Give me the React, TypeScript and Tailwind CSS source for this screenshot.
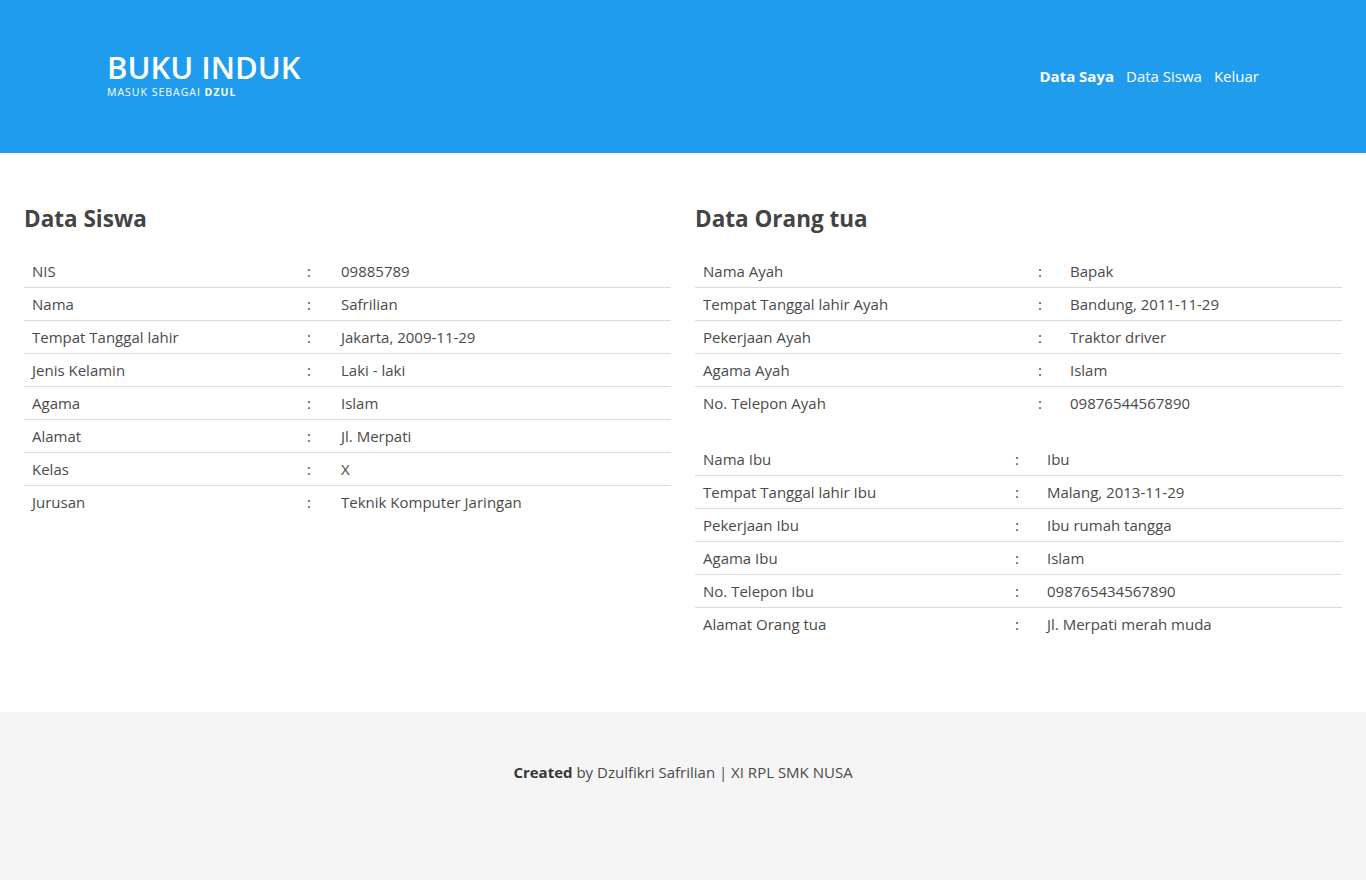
type Row = { label: string; value: string };

const siswa: Row[] = [
    { label: "NIS", value: "09885789" },
    { label: "Nama", value: "Safrilian" },
    { label: "Tempat Tanggal lahir", value: "Jakarta, 2009-11-29" },
    { label: "Jenis Kelamin", value: "Laki - laki" },
    { label: "Agama", value: "Islam" },
    { label: "Alamat", value: "Jl. Merpati" },
    { label: "Kelas", value: "X" },
    { label: "Jurusan", value: "Teknik Komputer Jaringan" },
];

const ayah: Row[] = [
    { label: "Nama Ayah", value: "Bapak" },
    { label: "Tempat Tanggal lahir Ayah", value: "Bandung, 2011-11-29" },
    { label: "Pekerjaan Ayah", value: "Traktor driver" },
    { label: "Agama Ayah", value: "Islam" },
    { label: "No. Telepon Ayah", value: "09876544567890" },
];

const ibu: Row[] = [
    { label: "Nama Ibu", value: "Ibu" },
    { label: "Tempat Tanggal lahir Ibu", value: "Malang, 2013-11-29" },
    { label: "Pekerjaan Ibu", value: "Ibu rumah tangga" },
    { label: "Agama Ibu", value: "Islam" },
    { label: "No. Telepon Ibu", value: "098765434567890" },
    { label: "Alamat Orang tua", value: "Jl. Merpati merah muda" },
];

function DataTable({ rows, labelWidth, colonWidth }: { rows: Row[]; labelWidth: string; colonWidth: string }) {
    return (
        <table className="w-full border-collapse text-[15px] text-[#4a4a4a]">
            <tbody>
                {rows.map((row, i) => (
                    <tr key={row.label} className={i < rows.length - 1 ? "border-b border-[#dbdbdb]" : ""}>
                        <td className={`${labelWidth} h-8 px-2 py-0 leading-8`}>{row.label}</td>
                        <td className={`${colonWidth} h-8 px-2 py-0 leading-8`}>:</td>
                        <td className="h-8 px-2 py-0 leading-8">{row.value}</td>
                    </tr>
                ))}
            </tbody>
        </table>
    );
}

export default function App() {
    return (
        <div className="min-h-screen flex flex-col bg-white font-['Open_Sans',sans-serif]">
            <header className="bg-[#209cee] h-[153px] flex items-center">
                <div className="w-[1152px] mx-auto flex items-center justify-between">
                    <div className="mt-[-5px]">
                        <h1 className="text-[31px] font-semibold leading-9 text-white">BUKU INDUK</h1>
                        <p className="text-[10.5px] leading-[14px] tracking-[1px] text-white">
                            MASUK SEBAGAI <strong className="font-bold">DZUL</strong>
                        </p>
                    </div>
                    <nav className="flex gap-3 text-[15px] text-white">
                        <a className="font-bold">Data Saya</a>
                        <a>Data Siswa</a>
                        <a>Keluar</a>
                    </nav>
                </div>
            </header>

            <main className="grid grid-cols-2 gap-6 px-6 pt-[50px] pb-[72px]">
                <section>
                    <h2 className="text-[22.5px] font-bold text-[#444] leading-8 mb-[20px]">Data Siswa</h2>
                    <DataTable rows={siswa} labelWidth="w-[275px]" colonWidth="w-[34px]" />
                </section>
                <section>
                    <h2 className="text-[22.5px] font-bold text-[#444] leading-8 mb-[20px]">Data Orang tua</h2>
                    <DataTable rows={ayah} labelWidth="w-[335px]" colonWidth="w-[32px]" />
                    <div className="h-6" />
                    <DataTable rows={ibu} labelWidth="w-[312px]" colonWidth="w-[32px]" />
                </section>
            </main>

            <footer className="flex-1 bg-[#f5f5f5] pt-12 pb-24 text-center text-[15px] leading-6 text-[#4a4a4a]">
                <strong className="text-[#363636]">Created</strong> by Dzulfikri Safrilian | XI RPL SMK NUSA
            </footer>
        </div>
    );
}
